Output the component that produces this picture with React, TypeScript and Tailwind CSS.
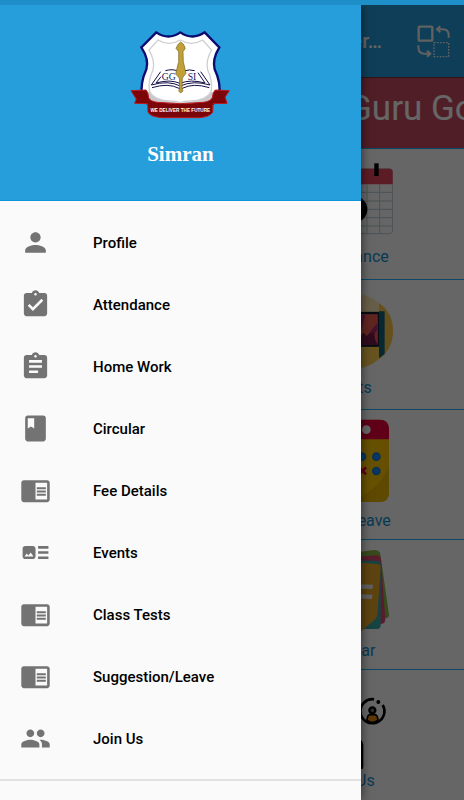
import type { ReactNode } from "react";
import type { IconType } from "react-icons";
import {
  MdArtTrack,
  MdAssignment,
  MdAssignmentTurnedIn,
  MdChromeReaderMode,
  MdClass,
  MdPeople,
  MdPerson,
} from "react-icons/md";

const menu: { label: string; icon: IconType }[] = [
  { label: "Profile", icon: MdPerson },
  { label: "Attendance", icon: MdAssignmentTurnedIn },
  { label: "Home Work", icon: MdAssignment },
  { label: "Circular", icon: MdClass },
  { label: "Fee Details", icon: MdChromeReaderMode },
  { label: "Events", icon: MdArtTrack },
  { label: "Class Tests", icon: MdChromeReaderMode },
  { label: "Suggestion/Leave", icon: MdChromeReaderMode },
  { label: "Join Us", icon: MdPeople },
];

function SchoolCrest() {
  return (
    <svg aria-label="School crest" className="size-[100px]" role="img" viewBox="30 30 300 300">
      <path
        d="M109 37 Q145 62 181 37 Q217 62 254 37 L298 82 Q276 118 284 148 Q304 190 297 228 Q285 270 181 275 Q77 270 66 228 Q60 190 79 148 Q88 118 64 82 Z"
        fill="#fff"
        stroke="#0b0b70"
        strokeWidth="7"
      />
      <path
        d="M68 226 Q80 275 181 275 Q282 275 295 226 L275 215 Q250 245 181 248 Q112 245 88 215 Z"
        fill="#c9c9cd"
      />
      <path
        d="M114 60 Q147 80 181 60 Q215 80 248 60 L275 90 Q256 122 263 150 Q278 180 274 212 Q262 240 211 243 Q192 243 181 248 Q170 243 151 243 Q100 240 88 212 Q84 180 99 150 Q106 122 87 90 Z"
        fill="#fff"
        stroke="#cfcfd3"
        strokeWidth="4"
      />
      {/* open book */}
      <g fill="none" stroke="#101048" strokeWidth="3">
        <path d="M122 155 L94 195 Q145 180 181 198 Q220 180 270 195 L242 155" />
        <path d="M123 170 L108 189 Q150 177 180 190 Q212 177 255 189 L234 158" />
        <path d="M96 203 Q145 188 177 205 L187 205 Q220 188 268 203" />
        <path d="M136 152 Q158 146 172 153 M192 153 Q208 147 224 152" />
      </g>
      <g fill="#19195f" fontFamily="Liberation Serif, serif" fontSize="29">
        <text x="125" y="181">GG</text>
        <text x="203" y="179">SI</text>
      </g>
      <path
        d="M182 66 L190 72 L196 85 L189 95 L190 125 L198 160 L187 174 L186 205 L189 213 L182 219 L176 213 L179 205 L178 174 L167 162 L176 125 L176 95 L168 85 L175 72 Z"
        fill="#c0a037"
        stroke="#796322"
        strokeWidth="2"
      />
      {/* ribbon */}
      <path
        d="M33 212 L78 210 Q84 214 86 233 Q90 244 112 247 Q181 255 250 247 Q272 244 277 233 Q279 214 286 210 L328 212 L315 231 L321 250 L279 251 L278 277 Q268 292 235 293 L128 293 Q90 291 84 276 L83 251 L44 250 L49 237 Z"
        fill="#7b0508"
        stroke="#bd171c"
        strokeWidth="3"
      />
      <text
        fill="#fff"
        fontFamily="Liberation Sans, sans-serif"
        fontSize="14"
        fontWeight="700"
        textAnchor="middle"
        x="181"
        y="277"
      >
        WE DELIVER THE FUTURE
      </text>
    </svg>
  );
}

function SwitchIcon() {
  return (
    <svg aria-hidden="true" className="size-[33px]" fill="none" stroke="#f2f2f2" viewBox="200 73 99 99">
      <rect height="42" rx="3" strokeWidth="7" width="41" x="205" y="78" />
      <path d="M295 111 V102 Q294 86 277 86 H262 M270 77 L260 86 L270 95" strokeWidth="6" />
      <path d="M204 134 V141 Q205 159 222 159 H237 M230 150 L240 159 L230 168" strokeWidth="6" />
      <rect height="42" strokeDasharray="5 4" strokeWidth="4" width="44" x="251" y="126" />
    </svg>
  );
}

const tiles: { label: string; viewBox: string; height: string; art: ReactNode }[] = [
  {
    label: "Attendance",
    viewBox: "-141 24 270 264",
    height: "h-[88px]",
    art: (
      <>
        <rect fill="#fff" fillOpacity="0.2" height="195" rx="10" stroke="#b9cbd3" strokeWidth="3" width="268" x="-140" y="59" />
        <path
          d="M-100 106V254M-62 106V254M-24 106V254M13 106V254M51 106V254M89 106V254M-140 130H128M-140 156H128M-140 181H128M-140 206H128M-140 231H128"
          stroke="#b9cbd3"
          strokeWidth="3"
        />
        <path d="M-141 106 V69 Q-141 59 -131 59 H118 Q128 59 128 69 V106 Z" fill="#e5485c" />
        <rect height="38" width="13" x="73" y="43" />
        <circle cx="12" cy="181" r="40" />
      </>
    ),
  },
  {
    label: "Events",
    viewBox: "-141 24 270 264",
    height: "h-[88px]",
    art: (
      <>
        <ellipse cx="-6" cy="153" fill="#ffecb4" rx="135" ry="116" />
        <path d="M87 69 Q129 98 129 153 Q129 205 90 236 L87 236 Z" fill="#fcc94a" />
        <path d="M-100 198 H88 V236 Q50 269 -6 269 Q-65 269 -100 236 Z" fill="#ffcf50" />
        <rect fill="#ef5d50" height="98" stroke="#101d38" strokeWidth="7" width="165" x="-78" y="99" />
        <path d="M33 105 H46 L33 153 Z M82 129 V151 L60 176 L50 168 Z" fill="#a82c70" />
        <path d="M33 166 L40 158 L51 169 L60 160 L73 158 L75 178 L83 194 H33 Z" fill="#781d4d" />
        <path d="M87 94 H104 V222 L87 235 Z" fill="#16647a" />
      </>
    ),
  },
  {
    label: "Apply Leave",
    viewBox: "-141 39 270 273",
    height: "h-[91px]",
    art: (
      <>
        <rect fill="#ffc800" height="247" rx="28" width="246" x="-129" y="44" />
        <path d="M117 180 Q98 240 33 275 V291 H89 Q117 291 117 263 Z" fill="#eab600" />
        <path d="M-129 103 V72 Q-129 44 -101 44 H89 Q117 44 117 72 V103 Z" fill="#ef003c" />
        <circle cx="49" cy="74" fill="#fff" r="13" />
        <g fill="#168bff" stroke="#1776d4" strokeWidth="4">
          <circle cx="36" cy="155" r="11" />
          <circle cx="79" cy="155" r="11" />
          <circle cx="79" cy="198" r="11" />
        </g>
        <path d="M28 187 L48 208 M48 187 L28 208" stroke="#ef003c" strokeWidth="8" />
      </>
    ),
  },
  {
    label: "Circular",
    viewBox: "-141 24 270 273",
    height: "h-[91px]",
    art: (
      <>
        <path d="M-60 47 L72 30 Q88 29 91 42 L117 225 Q117 234 106 235 L-30 255 Z" fill="#8ab946" />
        <path d="M-60 58 L78 46 Q91 46 93 58 L106 240 Q105 250 94 252 L-30 260 Z" fill="#dc4a72" />
        <path d="M-60 62 H82 Q92 62 92 74 V256 Q92 267 82 267 H-60 Z" fill="#36aaa8" />
        <path d="M-70 60 L83 72 Q92 73 92 82 L82 225 Q81 235 70 243 L33 274 L-80 262 Z" fill="#e6a92a" />
        <path d="M-20 131 L69 134 L68 147 L-20 143 Z M-20 161 L67 164 L66 177 L-20 174 Z" fill="#eee" />
      </>
    ),
  },
  {
    label: "Join Us",
    viewBox: "-141 39 270 273",
    height: "h-[91px]",
    art: (
      <>
        <path d="M72 103 A36 36 0 1 0 98 120" fill="none" stroke="#000" strokeWidth="8" />
        <circle cx="85" cy="111" r="6" />
        <path d="M51 166 Q52 149 60 149 H75 Q83 150 84 166 L72 172 H61 Z" fill="#e98a11" stroke="#000" strokeWidth="5" />
        <circle cx="67" cy="136" fill="#777" r="9" stroke="#000" strokeWidth="7" />
        <rect fill="none" height="95" rx="16" stroke="#000" strokeWidth="8" width="110" x="-74" y="224" />
      </>
    ),
  },
];

function Dashboard() {
  return (
    <main className="bg-white">
      <header className="flex h-[72px] items-center justify-between bg-[#269edb] pr-3.5">
        <h1 className="w-[382px] truncate text-right text-xl font-medium text-white">
          Guru Gobind Singh Inter…
        </h1>
        <button aria-label="Switch student" type="button">
          <SwitchIcon />
        </button>
      </header>
      <p className="h-[71px] overflow-hidden whitespace-nowrap border-t border-[#7c3040] bg-[#c94c62] pl-[75%] text-[35px] leading-[61px] text-white">
        Guru Gobind Singh
      </p>
      {tiles.map((tile) => (
        <section
          className="grid h-[130px] grid-cols-2 border-t border-[#1eb4ff] first-of-type:h-[131px]"
          key={tile.label}
        >
          <a className="col-start-2 flex flex-col items-center pt-2 text-[#1492d0]" href="#tile">
            <svg aria-hidden="true" className={`w-[90px] ${tile.height}`} viewBox={tile.viewBox}>
              {tile.art}
            </svg>
            <span className="text-base leading-6">{tile.label}</span>
          </a>
        </section>
      ))}
    </main>
  );
}

function Drawer() {
  return (
    <aside className="absolute inset-y-0 left-0 w-7/9 overflow-hidden bg-[#fafafa] shadow-[0_0_10px_rgba(0,0,0,0.6)]">
      <div className="flex h-[196px] flex-col items-center border-b border-[#0d94d8] bg-[#269edb] pt-[25px]">
        <SchoolCrest />
        <h2 className="mt-3 font-['Liberation_Serif',serif] text-[21px] font-bold leading-6 text-white">
          Simran
        </h2>
      </div>
      <nav className="border-b-2 border-[#e2e2e2] pt-[11px] pb-[9px]">
        <ul>
          {menu.map(({ label, icon: Icon }) => (
            <li key={label}>
              <a
                className="flex h-[62px] items-center gap-[42px] pl-5 text-[15px] leading-6 font-medium text-black"
                href="#menu"
              >
                <Icon aria-hidden="true" className="mb-px size-[31px] shrink-0 text-[#737373]" />
                {label}
              </a>
            </li>
          ))}
        </ul>
      </nav>
    </aside>
  );
}

export default function App() {
  return (
    <div className="flex h-screen flex-col overflow-hidden font-[Roboto,sans-serif]">
      <div className="z-10 h-[5px] shrink-0 bg-[#1f8fc9]" />
      <div className="relative flex-1 overflow-hidden">
        <Dashboard />
        <div className="absolute inset-0 bg-black/60" />
        <Drawer />
      </div>
    </div>
  );
}
